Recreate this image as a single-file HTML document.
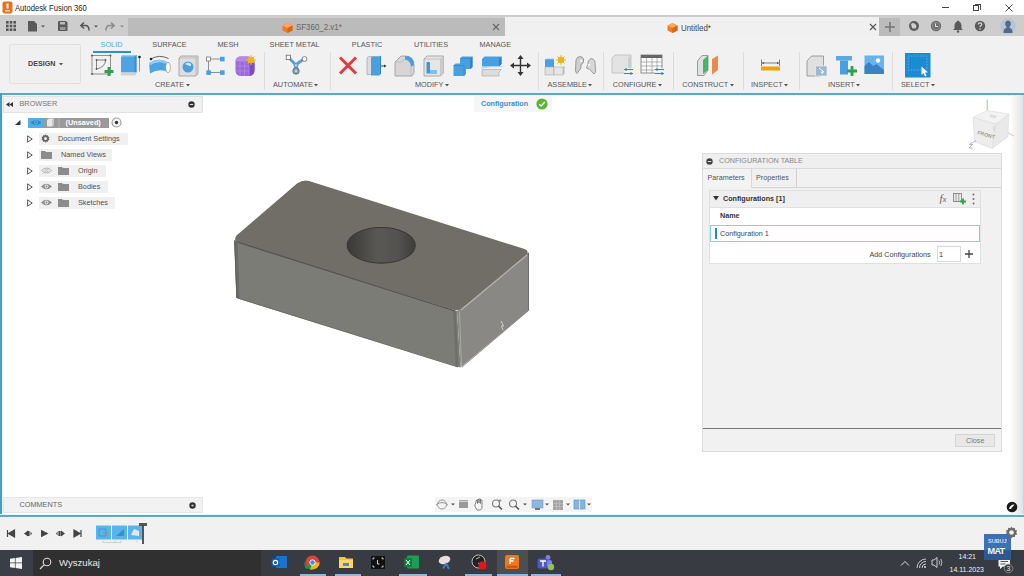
<!DOCTYPE html>
<html><head><meta charset="utf-8">
<style>
*{margin:0;padding:0;box-sizing:border-box}
html,body{width:1024px;height:576px;overflow:hidden;background:#fff;font-family:"Liberation Sans",sans-serif;position:relative}
.a{position:absolute}
.t{position:absolute;white-space:nowrap;line-height:1}
svg{position:absolute;overflow:visible}
.rl{position:absolute;top:40.6px;font-size:7.3px;color:#555;white-space:nowrap;line-height:1;transform:translateX(-50%)}
.gl{position:absolute;top:81px;font-size:7.3px;color:#555;white-space:nowrap;line-height:1}
.sep{position:absolute;top:52px;width:1px;height:38px;background:#dcdcdc}
</style></head><body>
<!-- title bar -->
<svg style="left:2px;top:1px" width="11" height="13" viewBox="0 0 11 13"><rect x="0.5" y="0.5" width="10" height="12" rx="2" fill="#e8711f"/><rect x="4.5" y="2.5" width="2" height="5" fill="#fff"/><rect x="3" y="9" width="5" height="1.5" fill="#fbd3b0"/></svg>
<div class="t" style="left:15px;top:4.2px;font-size:9px;color:#222;transform:scaleX(0.85);transform-origin:0 0">Autodesk Fusion 360</div>
<div class="a" style="left:942px;top:7px;width:7px;height:1px;background:#444"></div>
<div class="a" style="left:973px;top:5px;width:6px;height:6px;border:1px solid #444"></div>
<div class="a" style="left:975px;top:3.5px;width:6px;height:6px;border-top:1px solid #444;border-right:1px solid #444"></div>
<svg style="left:1005px;top:4px" width="8" height="8" viewBox="0 0 8 8"><path d="M0.5 0.5L7.5 7.5M7.5 0.5L0.5 7.5" stroke="#444" stroke-width="1"/></svg>
<!-- top toolbar row -->
<div class="a" style="left:0;top:15px;width:1024px;height:21px;background:#cdcdcd"></div>
<div class="a" style="left:128px;top:18px;width:377px;height:18px;background:#bbbbbb"></div>
<div class="a" style="left:505px;top:17px;width:374px;height:19px;background:#f0f0f0"></div>
<div class="a" style="left:879px;top:18px;width:21px;height:18px;background:#bbbbbb"></div>
<!-- qa icons -->
<svg style="left:6px;top:21px" width="10" height="10" viewBox="0 0 10 10" fill="#555"><rect x="0" y="0" width="2.6" height="2.6"/><rect x="3.7" y="0" width="2.6" height="2.6"/><rect x="7.4" y="0" width="2.6" height="2.6"/><rect x="0" y="3.7" width="2.6" height="2.6"/><rect x="3.7" y="3.7" width="2.6" height="2.6"/><rect x="7.4" y="3.7" width="2.6" height="2.6"/><rect x="0" y="7.4" width="2.6" height="2.6"/><rect x="3.7" y="7.4" width="2.6" height="2.6"/><rect x="7.4" y="7.4" width="2.6" height="2.6"/></svg>
<svg style="left:28px;top:21px" width="20" height="11" viewBox="0 0 20 11"><path d="M0 0H6L9 3V10.5H0Z" fill="#5a5a5a"/><path d="M13 4.5H17L15 6.5Z" fill="#555"/></svg>
<svg style="left:58px;top:21px" width="10" height="10" viewBox="0 0 10 10"><path d="M0 1Q0 0 1 0H8L9.5 1.5V9Q9.5 10 8.5 10H1Q0 10 0 9Z" fill="#5a5a5a"/><rect x="2" y="1" width="5" height="2.5" fill="#bbb"/><rect x="2" y="6" width="5.5" height="3" fill="#999"/></svg>
<svg style="left:80px;top:22px" width="20" height="10" viewBox="0 0 20 10"><path d="M4 0.5L0.8 3.5L4 6.5M1 3.5H5.5Q9 3.5 9 8.5" fill="none" stroke="#555" stroke-width="1.5"/><path d="M14 3.5H18L16 5.5Z" fill="#555"/></svg>
<svg style="left:105px;top:22px" width="20" height="10" viewBox="0 0 20 10"><path d="M6 0.5L9.2 3.5L6 6.5M9 3.5H4.5Q1 3.5 1 8.5" fill="none" stroke="#8a8a8a" stroke-width="1.5"/><path d="M15 3.5H19L17 5.5Z" fill="#8a8a8a"/></svg>
<!-- tabs -->
<svg style="left:282px;top:23px" width="11" height="10" viewBox="0 0 11 10"><path d="M5.5 0L10.5 2.5V7.5L5.5 10L0.5 7.5V2.5Z" fill="#f07c22"/><path d="M0.5 2.5L5.5 5L10.5 2.5L5.5 0Z" fill="#f9a860"/><path d="M5.5 5V10L10.5 7.5V2.5Z" fill="#e0620f"/></svg>
<div class="t" style="left:296px;top:23.3px;font-size:9px;color:#666;transform:scaleX(0.88);transform-origin:0 0">SF360_2.v1*</div>
<svg style="left:492px;top:23px" width="8" height="8" viewBox="0 0 8 8"><path d="M1 1L7 7M7 1L1 7" stroke="#666" stroke-width="1.1"/></svg>
<svg style="left:667px;top:22.5px" width="11" height="10" viewBox="0 0 11 10"><path d="M5.5 0L10.5 2.5V7.5L5.5 10L0.5 7.5V2.5Z" fill="#f07c22"/><path d="M0.5 2.5L5.5 5L10.5 2.5L5.5 0Z" fill="#f9a860"/><path d="M5.5 5V10L10.5 7.5V2.5Z" fill="#e0620f"/></svg>
<div class="t" style="left:680.5px;top:23.9px;font-size:8.7px;color:#444;transform:scaleX(0.91);transform-origin:0 0">Untitled*</div>
<svg style="left:869px;top:23px" width="8" height="8" viewBox="0 0 8 8"><path d="M1 1L7 7M7 1L1 7" stroke="#555" stroke-width="1.1"/></svg>
<svg style="left:884px;top:21px" width="12" height="12" viewBox="0 0 12 12"><path d="M6 1V11M1 6H11" stroke="#777" stroke-width="1.6"/></svg>
<svg style="left:908px;top:20px" width="12" height="12" viewBox="0 0 12 12"><circle cx="6" cy="6" r="5" fill="#5c5c5c"/><path d="M3 4Q5 2 7 4Q9 5 8 8Q6 9 4 8" fill="#cfcfcf"/></svg>
<svg style="left:930px;top:20px" width="12" height="12" viewBox="0 0 12 12"><circle cx="6" cy="6" r="5.2" fill="#6a6a6a"/><circle cx="6" cy="6" r="3.6" fill="none" stroke="#999" stroke-width="0.8"/><path d="M5.5 3.5V6.5H8" stroke="#e0e0e0" stroke-width="1.1" fill="none"/></svg>
<svg style="left:952px;top:20px" width="12" height="13" viewBox="0 0 12 13"><path d="M6 0.5Q7 0.5 7 1.5Q9.5 2.5 9.5 6V8.5L11 10H1L2.5 8.5V6Q2.5 2.5 5 1.5Q5 0.5 6 0.5Z" fill="#5a5a5a"/><circle cx="6" cy="11.5" r="1.2" fill="#5a5a5a"/></svg>
<svg style="left:974px;top:20px" width="12" height="12" viewBox="0 0 12 12"><circle cx="6" cy="6" r="5.2" fill="#5a5a5a"/><path d="M4.2 4.6Q4.2 2.8 6 2.8Q7.8 2.8 7.8 4.4Q7.8 5.4 6.6 6Q6 6.3 6 7.2" stroke="#ddd" stroke-width="1.2" fill="none"/><circle cx="6" cy="9" r="0.8" fill="#ddd"/></svg>
<svg style="left:999.5px;top:18px" width="16" height="16" viewBox="0 0 16 16"><circle cx="8" cy="8" r="7.8" fill="#b8c4d4"/><path d="M3.5 15Q3.5 10 6.5 10V9Q5 7.5 5.2 5Q5.5 2.5 8 2.5Q10.5 2.5 10.8 5Q11 7.5 9.5 9V10Q12.5 10 12.5 15Z" fill="#4e6a8e"/></svg>
<!-- ribbon -->
<div class="a" style="left:0;top:36px;width:1024px;height:57px;background:#f1f1f1"></div>
<div class="a" style="left:0;top:92px;width:1024px;height:4px;background:linear-gradient(#e2f8fa 0,#e2f8fa 25%,#62a6c4 25%,#62a6c4 75%,#e2f8fa 75%)"></div>
<div class="a" style="left:8.5px;top:44px;width:72px;height:40px;border:1px solid #e0e0e0;border-radius:2px;background:#f0f0f0"></div>
<div class="t" style="left:28px;top:59.5px;font-size:7.2px;font-weight:bold;color:#444">DESIGN</div>
<svg style="left:58.5px;top:62.5px" width="4" height="3" viewBox="0 0 4 3"><path d="M0 0H4L2 2.5Z" fill="#555"/></svg>
<div class="rl" style="left:111.5px;color:#57a6d4">SOLID</div>
<div class="a" style="left:92.5px;top:50.5px;width:38px;height:2px;background:#2e8fd0"></div>
<div class="rl" style="left:169.5px">SURFACE</div>
<div class="rl" style="left:228px">MESH</div>
<div class="rl" style="left:294.6px">SHEET METAL</div>
<div class="rl" style="left:367px">PLASTIC</div>
<div class="rl" style="left:431px">UTILITIES</div>
<div class="rl" style="left:495.3px">MANAGE</div>
<div class="gl" style="left:155px">CREATE</div>
<svg style="left:185.6px;top:83.5px" width="4" height="3" viewBox="0 0 4 3"><path d="M0 0H4L2 2.5Z" fill="#555"/></svg>
<div class="gl" style="left:273px">AUTOMATE</div>
<svg style="left:314.4px;top:83.5px" width="4" height="3" viewBox="0 0 4 3"><path d="M0 0H4L2 2.5Z" fill="#555"/></svg>
<div class="gl" style="left:415px">MODIFY</div>
<svg style="left:444.9px;top:83.5px" width="4" height="3" viewBox="0 0 4 3"><path d="M0 0H4L2 2.5Z" fill="#555"/></svg>
<div class="gl" style="left:547.5px">ASSEMBLE</div>
<svg style="left:588.3px;top:83.5px" width="4" height="3" viewBox="0 0 4 3"><path d="M0 0H4L2 2.5Z" fill="#555"/></svg>
<div class="gl" style="left:612.7px">CONFIGURE</div>
<svg style="left:658.0px;top:83.5px" width="4" height="3" viewBox="0 0 4 3"><path d="M0 0H4L2 2.5Z" fill="#555"/></svg>
<div class="gl" style="left:682.3px">CONSTRUCT</div>
<svg style="left:729.6px;top:83.5px" width="4" height="3" viewBox="0 0 4 3"><path d="M0 0H4L2 2.5Z" fill="#555"/></svg>
<div class="gl" style="left:751px">INSPECT</div>
<svg style="left:784.1px;top:83.5px" width="4" height="3" viewBox="0 0 4 3"><path d="M0 0H4L2 2.5Z" fill="#555"/></svg>
<div class="gl" style="left:828px">INSERT</div>
<svg style="left:856.1px;top:83.5px" width="4" height="3" viewBox="0 0 4 3"><path d="M0 0H4L2 2.5Z" fill="#555"/></svg>
<div class="gl" style="left:901px">SELECT</div>
<svg style="left:930.9px;top:83.5px" width="4" height="3" viewBox="0 0 4 3"><path d="M0 0H4L2 2.5Z" fill="#555"/></svg>
<div class="sep" style="left:263.5px"></div>
<div class="sep" style="left:330px"></div>
<div class="sep" style="left:538px"></div>
<div class="sep" style="left:603px"></div>
<div class="sep" style="left:672.5px"></div>
<div class="sep" style="left:742.5px"></div>
<div class="sep" style="left:798.5px"></div>
<div class="sep" style="left:891.5px"></div>
<!-- CREATE icons -->
<svg style="left:91px;top:55px" width="23" height="22" viewBox="0 0 23 22"><rect x="1" y="0.5" width="18.5" height="18.5" fill="none" stroke="#777" stroke-width="0.8"/><circle cx="1" cy="0.5" r="0.9" fill="#555"/><circle cx="19.5" cy="0.5" r="0.9" fill="#555"/><circle cx="1" cy="19" r="0.9" fill="#555"/><path d="M5.5 5H14.5Q14.5 12 5.5 14Z" fill="none" stroke="#666" stroke-width="0.8"/><circle cx="5.5" cy="5" r="0.9" fill="#555"/><circle cx="14.5" cy="5" r="0.9" fill="#555"/><circle cx="5.5" cy="14" r="0.9" fill="#555"/><path d="M18 12V21M13.5 16.5H22.5" stroke="#2ca24a" stroke-width="2.8"/></svg>
<svg style="left:120px;top:54px" width="22" height="23" viewBox="0 0 22 23"><path d="M1 4Q1 1 4 1H16.5V18.5H1Z" fill="#4ea3e3"/><path d="M1 4Q1 1 4 1H16.5L15.5 2.5H2.5Q1.2 2.5 1 4Z" fill="#8fcdf3"/><path d="M14.5 2.5L16.5 1V18.5L14.5 18.5Z" fill="#3a8fd6"/><path d="M1 18.5H16.5L15.5 21.5H1Z" fill="#cfd3d6"/><path d="M19.5 3V17.5" stroke="#8a8a8a" stroke-width="0.9"/><circle cx="19.5" cy="3" r="1.3" fill="#222"/></svg>
<svg style="left:148px;top:54px" width="24" height="22" viewBox="0 0 24 22"><path d="M3 5Q11 0 20.5 4.5" fill="none" stroke="#555" stroke-width="0.9"/><circle cx="3" cy="5" r="1.3" fill="#222"/><path d="M1 9Q11 3 20.5 8.5V18Q11 14 2 19.5Z" fill="#4ea3e3"/><path d="M1 9Q11 3 20.5 8.5L18.5 10Q11 6 1.5 11.5Z" fill="#8fcdf3"/><ellipse cx="20" cy="13.5" rx="2.3" ry="5" fill="#fff" stroke="#8a8a8a" stroke-width="0.7"/></svg>
<svg style="left:178px;top:55px" width="22" height="22" viewBox="0 0 22 22"><path d="M1 3L3 1H20V19L18 21H1Z" fill="#dedede" stroke="#9a9a9a" stroke-width="0.8"/><path d="M18 3V21M1 3H18M18 3L20 1" fill="none" stroke="#aaa" stroke-width="0.6"/><path d="M18 3L20 1V19L18 21Z" fill="#c6c6c6"/><circle cx="10" cy="12" r="5.5" fill="#4a9fe0"/><path d="M7 9Q10 7 12.5 8.5Q14 10.5 12 11Q9 10 7 9Z" fill="#d8ecfa"/></svg>
<svg style="left:205px;top:55px" width="22" height="21" viewBox="0 0 22 21"><path d="M3.5 4H17.5M3.5 4V17.5H17.5" fill="none" stroke="#777" stroke-width="0.8"/><rect x="1.5" y="2" width="4" height="4" fill="#fff" stroke="#777" stroke-width="0.8"/><rect x="15" y="1.8" width="4.6" height="4.6" fill="#4a9fe0"/><rect x="1.3" y="15.3" width="4.6" height="4.6" fill="#4a9fe0"/><rect x="15" y="15.3" width="4.6" height="4.6" fill="#4a9fe0"/></svg>
<svg style="left:235px;top:55px" width="22" height="22" viewBox="0 0 22 22"><path d="M0.5 7Q0.5 1.5 6 1.5H13Q19.5 1.5 19.5 8V15Q19.5 21 13.5 21H6Q0.5 21 0.5 15Z" fill="#9a6ad8"/><path d="M0.5 7Q0.5 1.5 6 1.5H13Q16 1.5 17.5 3L14 6.5H1Z" fill="#b48ae6"/><path d="M14 6.5L17.5 3Q19.5 5 19.5 8V15Q19.5 19 16 20.5L14 21Z" fill="#7d4ec4"/><path d="M1 11H14M1 16H14M5 6.5V21M9.5 6.5V21M14 6.5V21" stroke="#b996ea" stroke-width="0.6" fill="none"/><circle cx="16" cy="5" r="3.3" fill="#f2b41c"/><path d="M16 0V10M11 5H21M12.5 1.5L19.5 8.5M19.5 1.5L12.5 8.5" stroke="#f2b41c" stroke-width="1"/></svg>
<!-- AUTOMATE -->
<svg style="left:285px;top:54px" width="23" height="21" viewBox="0 0 23 21"><path d="M4 4L9.5 9.5L11 15L12.5 9.5L19 5" fill="none" stroke="#5b9bd0" stroke-width="2.8" stroke-linejoin="round"/><path d="M8 9H14L11 14.5Z" fill="#5b9bd0"/><path d="M9.5 10.5H12.5L11 13Z" fill="#cfe3f3"/><rect x="1.2" y="1.2" width="4.2" height="4.2" fill="#fff" stroke="#666" stroke-width="0.8"/><circle cx="19.5" cy="5" r="2.4" fill="#fff" stroke="#666" stroke-width="0.8"/><circle cx="11" cy="17" r="3.2" fill="#7f9fbb" stroke="#5d6f80" stroke-width="0.9"/><circle cx="11" cy="17" r="1.3" fill="#c9d4de"/></svg>
<!-- MODIFY -->
<svg style="left:338px;top:56px" width="20" height="19" viewBox="0 0 20 19"><path d="M2 1.5L18 17.5M18 1.5L2 17.5" stroke="#e33b3b" stroke-width="3"/></svg>
<svg style="left:366px;top:55px" width="21" height="22" viewBox="0 0 21 22"><path d="M1 4Q1 1.5 3.5 1.5H13V19.5H1Z" fill="#dcdcdc" stroke="#999" stroke-width="0.6"/><path d="M5 2.5Q6 1.5 8 1.5H13.5V20.5H5Z" fill="#4a9fe0"/><path d="M13.5 1.5L15 0.5V18.5L13.5 20.5Z" fill="#2e7fc4"/><path d="M15 11H19.5" stroke="#333" stroke-width="0.9"/><path d="M18 9.5L20.5 11L18 12.5Z" fill="#333"/></svg>
<svg style="left:394px;top:55px" width="22" height="22" viewBox="0 0 22 22"><path d="M1 7L7 1H11Q20 1 20 10V18L18 21H1Z" fill="#d6d6d6" stroke="#9a9a9a" stroke-width="0.8"/><path d="M11 1Q20 1 20 10L17 12Q16.5 5 11 4.5Z" fill="#4a9fe0"/><path d="M17 12V21M1 7H7L11 4.5" fill="none" stroke="#aaa" stroke-width="0.5"/></svg>
<svg style="left:423px;top:55px" width="22" height="22" viewBox="0 0 22 22"><path d="M1 4L4 1H20.5V18L17.5 21H1Z" fill="#e6e6e6" stroke="#999" stroke-width="0.8"/><path d="M17.5 4V21M1 4H17.5L20.5 1" fill="none" stroke="#aaa" stroke-width="0.6"/><path d="M17.5 4L20.5 1V18L17.5 21Z" fill="#cbcbcb"/><path d="M3.5 7H7V15H14V18.5H3.5Z" fill="#3d95dc"/><path d="M7 15H14V18.5H7Z" fill="#7cc0ef"/></svg>
<svg style="left:452px;top:55px" width="22" height="22" viewBox="0 0 22 22"><path d="M8 3.5L10 1.5H20.5V12L18.5 14H14V19L12 21H1.5V10.5L3.5 8.5H8Z" fill="#4a9fe0"/><path d="M8 3.5H18.5V14M1.5 10.5H12V21" fill="none" stroke="#2f82c8" stroke-width="0.6"/><path d="M18.5 3.5L20.5 1.5V12L18.5 14Z" fill="#2f82c8"/></svg>
<svg style="left:481px;top:55px" width="22" height="22" viewBox="0 0 22 22"><path d="M1 4L3.5 1.5H20.5V9L18 11.5H1Z" fill="#4a9fe0"/><path d="M18 4L20.5 1.5V9L18 11.5Z" fill="#2f82c8"/><path d="M1 14.5H20.5L18 17V21H1Z" fill="#dcdcdc" stroke="#999" stroke-width="0.5"/><path d="M0 13Q10 11 21.5 11.5" fill="none" stroke="#a9d6f5" stroke-width="1"/></svg>
<svg style="left:510px;top:55px" width="21" height="21" viewBox="0 0 21 21"><path d="M10.5 2V19M2 10.5H19" stroke="#333" stroke-width="1.4"/><path d="M10.5 0L13.5 4H7.5ZM10.5 21L13.5 17H7.5ZM0 10.5L4 7.5V13.5ZM21 10.5L17 7.5V13.5Z" fill="#333"/></svg>
<!-- ASSEMBLE -->
<svg style="left:544px;top:55px" width="24" height="21" viewBox="0 0 24 21"><rect x="1" y="4" width="9" height="8" fill="#4a9fe0"/><path d="M1 5.5L2.5 4H10" fill="none" stroke="#8ccaf2" stroke-width="0.8"/><rect x="1" y="12" width="9" height="8" fill="#e0e0e0" stroke="#aaa" stroke-width="0.6"/><rect x="10" y="12" width="9" height="8" fill="#e6e6e6" stroke="#aaa" stroke-width="0.6"/><path d="M19 12L20.5 10.5V18.5L19 20Z" fill="#bbb"/><circle cx="17" cy="5" r="3.2" fill="#f2b41c"/><path d="M17 0V10M12 5H22M13.5 1.5L20.5 8.5M20.5 1.5L13.5 8.5" stroke="#f2b41c" stroke-width="1"/></svg>
<svg style="left:574px;top:55px" width="23" height="20" viewBox="0 0 23 20"><path d="M2 5Q3 1.5 6 1.5Q8.5 1.5 9.5 4V7Q9 9 7 9.5V13L3 18.5Q1.5 17.5 1.5 15Z" fill="#cfcfcf" stroke="#888" stroke-width="0.8"/><path d="M21 7Q20 3.5 17 3.5Q15 4.5 14 7V10Q12.5 11 12.5 13Q14 14 15.5 14L20 19Q21.5 18 21.5 16Z" fill="#d8d8d8" stroke="#888" stroke-width="0.8"/><circle cx="7" cy="6" r="1" fill="#fff"/><circle cx="15" cy="10" r="1" fill="#fff"/></svg>
<!-- CONFIGURE -->
<svg style="left:611px;top:54px" width="24" height="22" viewBox="0 0 24 22"><path d="M1 4L4 1H20V16L17 19H1Z" fill="#e3e3e3" stroke="#b5b5b5" stroke-width="0.7"/><path d="M17 4L20 1V16L17 19Z" fill="#cdcdcd"/><rect x="13" y="14" width="9" height="7" fill="#f1f1f1"/><path d="M13 15.5H22M13 19.5H22" stroke="#3d7bb0" stroke-width="1"/><path d="M15 14V17M20 18V21" stroke="#3d7bb0" stroke-width="1"/></svg>
<svg style="left:640px;top:54px" width="25" height="22" viewBox="0 0 25 22"><rect x="1" y="1" width="21" height="18" fill="#fafafa" stroke="#777" stroke-width="0.8"/><rect x="1" y="1" width="21" height="3" fill="#666"/><path d="M1 8H22M1 12H22M1 16H22M6.5 4V19M12 4V19M17 4V19" stroke="#888" stroke-width="0.6"/><rect x="15" y="14" width="9" height="7" fill="#f1f1f1"/><path d="M15 15.5H24M15 19.5H24" stroke="#3d7bb0" stroke-width="1"/><path d="M17 14V17M22 18V21" stroke="#3d7bb0" stroke-width="1"/></svg>
<!-- CONSTRUCT -->
<svg style="left:696px;top:54px" width="24" height="23" viewBox="0 0 24 23"><path d="M1.5 7L6 1.5H12V16L8 21.5H1.5Z" fill="#e0e0e0" stroke="#888" stroke-width="0.8"/><path d="M7 6L12 1.5V16L7 20Z" fill="#44b766"/><path d="M16 5L22 1.5V16L16 20.5Z" fill="#ef8a4c"/></svg>
<!-- INSPECT -->
<svg style="left:760px;top:59px" width="22" height="13" viewBox="0 0 22 13"><path d="M1.5 0.5V7M19.5 0.5V7" stroke="#666" stroke-width="0.8"/><path d="M2 4H19" stroke="#666" stroke-width="0.8"/><path d="M2 4L4 2.8V5.2ZM19 4L17 2.8V5.2Z" fill="#555"/><rect x="1" y="7.5" width="19" height="4" fill="#f1a30f"/></svg>
<!-- INSERT -->
<svg style="left:806px;top:55px" width="22" height="22" viewBox="0 0 22 22"><path d="M1 6L5.5 1H17.5V18L14 21H1Z" fill="#e0e0e0" stroke="#8c8c8c" stroke-width="0.8"/><rect x="9.5" y="11" width="11.5" height="10" fill="#9cb8d0" stroke="#eee" stroke-width="0.7"/><path d="M13 13L18 17L15.5 17L16.5 19" fill="none" stroke="#fff" stroke-width="1"/></svg>
<svg style="left:835px;top:55px" width="23" height="21" viewBox="0 0 23 21"><rect x="1" y="1" width="16" height="4.5" fill="#5da8e2"/><rect x="5" y="5.5" width="8" height="14" fill="#4a9fe0"/><path d="M17 11V21M12 16H22" stroke="#2ca24a" stroke-width="2.8"/></svg>
<svg style="left:864px;top:55px" width="21" height="20" viewBox="0 0 21 20"><rect x="0.5" y="0.5" width="19.5" height="18.5" fill="#67b4ec"/><path d="M0.5 19V11L5 7L9 11L12.5 9L20 15V19Z" fill="#3b82c4"/><circle cx="14" cy="5.5" r="2.2" fill="#fafafa"/></svg>
<!-- SELECT -->
<svg style="left:905px;top:53px" width="26" height="25" viewBox="0 0 26 25"><rect x="0" y="0" width="25.5" height="24.5" fill="#1b8bd4"/><rect x="3" y="3" width="19" height="14" fill="none" stroke="#7cc0ef" stroke-width="0.7" stroke-dasharray="1.5 1.5"/><path d="M16.5 13.5V22L18.5 20L20 23.5L21.5 22.8L20 19.5H23Z" fill="#fff"/></svg>
<!-- viewport -->
<div class="a" style="left:0;top:96px;width:1024px;height:418px;background:#fff"></div>
<div class="a" style="left:1010px;top:95px;width:14px;height:420px;background:linear-gradient(to right,#fff 0%,#f3f2f0 40%,#ebebea 65%,#dfe6eb 88%,#c3ced6 100%)"></div>
<div class="a" style="left:0;top:93px;width:1.6px;height:423px;background:#4a9cc4"></div><div class="a" style="left:2px;top:95px;width:1px;height:420px;background:#dff7fa"></div>
<div class="a" style="left:0;top:514px;width:1024px;height:4px;background:linear-gradient(#e2f8fa 0,#e2f8fa 25%,#62a6c4 25%,#62a6c4 75%,#e2f8fa 75%)"></div>
<!-- browser -->
<div class="a" style="left:2.5px;top:96px;width:200px;height:16.5px;background:#f1f1f1;border:1px solid #e2e2e2"></div>
<svg style="left:6px;top:102px" width="7" height="5" viewBox="0 0 7 5"><path d="M0 2.5L3.5 0V5ZM3.5 2.5L7 0V5Z" fill="#333"/></svg>
<div class="t" style="left:19.5px;top:100px;font-size:7.3px;color:#777">BROWSER</div>
<svg style="left:188px;top:100.5px" width="7" height="7" viewBox="0 0 7 7"><circle cx="3.5" cy="3.5" r="3.2" fill="#333"/><rect x="1.8" y="3" width="3.4" height="1" fill="#ddd"/></svg>
<!-- root row -->
<svg style="left:15px;top:120px" width="6" height="5" viewBox="0 0 6 5"><path d="M5.5 0V5H0Z" fill="#333"/></svg>
<div class="a" style="left:28px;top:117.5px;width:16px;height:10px;background:#4fb0e8"></div>
<svg style="left:30px;top:119px" width="12" height="7" viewBox="0 0 12 7"><path d="M0.5 3.5Q6 -1.5 11.5 3.5Q6 8.5 0.5 3.5Z" fill="#2c86c8"/><circle cx="6" cy="3.5" r="1.6" fill="none" stroke="#8fd0f5" stroke-width="0.6"/></svg>
<div class="a" style="left:44px;top:117.5px;width:64.5px;height:10px;background:#9a9a9a"></div>
<svg style="left:46px;top:118px" width="9" height="9" viewBox="0 0 9 9"><path d="M1 2L3 0.5H8V7L6 8.5H1Z" fill="#e8e8e8"/><path d="M6 2L8 0.5V7L6 8.5Z" fill="#c8c8c8"/></svg>
<div class="a" style="left:58px;top:117.5px;width:2px;height:10px;background:#a8a8a8"></div>
<div class="t" style="left:65.5px;top:119px;font-size:7.3px;font-weight:bold;color:#fff">(Unsaved)</div>
<svg style="left:110.5px;top:117px" width="11" height="11" viewBox="0 0 11 11"><circle cx="5.5" cy="5.5" r="4.5" fill="#f6f6f6" stroke="#a0a0a0" stroke-width="1.2"/><circle cx="5.5" cy="5.5" r="1.7" fill="#333"/></svg>
<!-- child rows -->
<svg style="left:27px;top:135px" width="6" height="8" viewBox="0 0 6 8"><path d="M0.6 0.8L5.2 4L0.6 7.2Z" fill="none" stroke="#444" stroke-width="0.9"/></svg>
<svg style="left:27px;top:151px" width="6" height="8" viewBox="0 0 6 8"><path d="M0.6 0.8L5.2 4L0.6 7.2Z" fill="none" stroke="#444" stroke-width="0.9"/></svg>
<svg style="left:27px;top:167px" width="6" height="8" viewBox="0 0 6 8"><path d="M0.6 0.8L5.2 4L0.6 7.2Z" fill="none" stroke="#444" stroke-width="0.9"/></svg>
<svg style="left:27px;top:183px" width="6" height="8" viewBox="0 0 6 8"><path d="M0.6 0.8L5.2 4L0.6 7.2Z" fill="none" stroke="#444" stroke-width="0.9"/></svg>
<svg style="left:27px;top:199px" width="6" height="8" viewBox="0 0 6 8"><path d="M0.6 0.8L5.2 4L0.6 7.2Z" fill="none" stroke="#444" stroke-width="0.9"/></svg>
<div class="a" style="left:39px;top:132.5px;width:89px;height:12.5px;background:#f0f0f0"></div>
<div class="a" style="left:39px;top:148.5px;width:73px;height:12.5px;background:#f0f0f0"></div>
<div class="a" style="left:39px;top:164.5px;width:66.5px;height:12.5px;background:#f0f0f0"></div>
<div class="a" style="left:39px;top:180.5px;width:68.5px;height:12.5px;background:#f0f0f0"></div>
<div class="a" style="left:39px;top:196.5px;width:76px;height:12.5px;background:#f0f0f0"></div>
<svg style="left:40.5px;top:134px" width="9" height="9" viewBox="0 0 9 9"><path d="M4.5 0.3L5.3 1.6L6.8 1.1L7 2.6L8.5 3.1L7.8 4.5L8.5 5.9L7 6.4L6.8 7.9L5.3 7.4L4.5 8.7L3.7 7.4L2.2 7.9L2 6.4L0.5 5.9L1.2 4.5L0.5 3.1L2 2.6L2.2 1.1L3.7 1.6Z" fill="#666"/><circle cx="4.5" cy="4.5" r="1.5" fill="#f0f0f0"/></svg>
<div class="t" style="left:58px;top:135px;font-size:7.3px;color:#505050">Document Settings</div>
<svg style="left:40.5px;top:150px" width="11" height="9" viewBox="0 0 11 9"><path d="M0 1H4L5 2H11V9H0Z" fill="#8c8c8c"/></svg>
<div class="t" style="left:61px;top:151px;font-size:7.3px;color:#505050">Named Views</div>
<svg style="left:40.5px;top:167px" width="11" height="7" viewBox="0 0 11 7"><path d="M0.5 3.5Q5.5 -1.5 10.5 3.5Q5.5 8.5 0.5 3.5Z" fill="none" stroke="#b8b8b8" stroke-width="1"/><circle cx="5.5" cy="3.5" r="1.6" fill="none" stroke="#b8b8b8" stroke-width="0.9"/><path d="M1.5 6.5L9.5 0.5" stroke="#c4c4c4" stroke-width="0.7"/></svg>
<svg style="left:57.5px;top:166px" width="11" height="9" viewBox="0 0 11 9"><path d="M0 1H4L5 2H11V9H0Z" fill="#8c8c8c"/></svg>
<div class="t" style="left:78px;top:167px;font-size:7.3px;color:#505050">Origin</div>
<svg style="left:40.5px;top:183px" width="11" height="7" viewBox="0 0 11 7"><path d="M0 3.5Q5.5 -2 11 3.5Q5.5 9 0 3.5Z" fill="#8c8c8c"/><circle cx="5.5" cy="3.5" r="1.9" fill="#e8e8e8"/><circle cx="5.5" cy="3.5" r="1" fill="#8c8c8c"/></svg>
<svg style="left:57.5px;top:182px" width="11" height="9" viewBox="0 0 11 9"><path d="M0 1H4L5 2H11V9H0Z" fill="#8c8c8c"/></svg>
<div class="t" style="left:78px;top:183px;font-size:7.3px;color:#505050">Bodies</div>
<svg style="left:40.5px;top:199px" width="11" height="7" viewBox="0 0 11 7"><path d="M0 3.5Q5.5 -2 11 3.5Q5.5 9 0 3.5Z" fill="#8c8c8c"/><circle cx="5.5" cy="3.5" r="1.9" fill="#e8e8e8"/><circle cx="5.5" cy="3.5" r="1" fill="#8c8c8c"/></svg>
<svg style="left:57.5px;top:198px" width="11" height="9" viewBox="0 0 11 9"><path d="M0 1H4L5 2H11V9H0Z" fill="#8c8c8c"/></svg>
<div class="t" style="left:78px;top:199px;font-size:7.3px;color:#505050">Sketches</div>
<!-- configuration label -->
<div class="a" style="left:474px;top:96px;width:78px;height:16px;background:#f6f6f6"></div>
<div class="t" style="left:481px;top:100.3px;font-size:7.2px;font-weight:bold;color:#3d8fc8">Configuration</div>
<svg style="left:536px;top:98px" width="12" height="12" viewBox="0 0 12 12"><circle cx="6" cy="6" r="5.6" fill="#5cb531"/><path d="M3.2 6.2L5.2 8L8.8 4" fill="none" stroke="#fff" stroke-width="1.5"/></svg>
<!-- 3D model -->
<svg style="left:0;top:0" width="1024" height="576" viewBox="0 0 1024 576">
<defs>
<linearGradient id="hg" x1="0" x2="1" y1="0" y2="0"><stop offset="0" stop-color="#3a3937"/><stop offset="0.45" stop-color="#5a5855"/><stop offset="0.75" stop-color="#545250"/><stop offset="1" stop-color="#3e3d3b"/></linearGradient>
</defs>
<!-- front face -->
<path d="M234 240L457 311L460.5 367.5L236.5 298Z" fill="#7b7c76"/>
<!-- right face -->
<path d="M457 311L528.5 252L528.5 310.5L460.5 367.5Z" fill="#8a8884"/>
<!-- top face -->
<path d="M297 183.5Q303 179.5 309 181L524.5 249Q530 251 526 255L462 308Q458 311.5 452 309.5L238.5 242.5Q233 240.5 236.5 235.5Z" fill="#716d67"/>
<!-- edges -->
<path d="M237 242L455 311" stroke="#56544f" stroke-width="1.3" fill="none"/>
<path d="M461 310L527 255" stroke="#b8b5b0" stroke-width="1.2" fill="none"/>
<path d="M236 241L238 298" stroke="#6b6d68" stroke-width="3.2" fill="none"/>
<path d="M234.8 240.5L236.8 298" stroke="#5d5f5a" stroke-width="0.9" fill="none"/>
<path d="M237.5 298L458 367" stroke="#6a6c67" stroke-width="1" fill="none"/>
<path d="M454.5 311L457 366.5" stroke="#6d6f6a" stroke-width="2.6" fill="none"/>
<path d="M459.5 311L461.5 367" stroke="#a9a8a3" stroke-width="1" fill="none"/>
<path d="M462 367L528.5 310.5" stroke="#7a7874" stroke-width="0.8" fill="none"/>
<path d="M528.5 253L528.5 310.5" stroke="#6f6d69" stroke-width="1" fill="none"/>
<!-- hole -->
<ellipse cx="381.2" cy="245.3" rx="34" ry="17.8" fill="url(#hg)" stroke="#3b3835" stroke-width="1.1"/>
<path d="M501 321L503.5 326L501.5 326L503 330" stroke="#d0d0cc" stroke-width="1" fill="none"/>
</svg>
<!-- config panel -->
<div class="a" style="left:702px;top:152.5px;width:300px;height:299.5px;background:#f1f1f1;border:1px solid #dcdcdc"></div>
<div class="a" style="left:703px;top:153.5px;width:298px;height:15.5px;background:#efefef;border-bottom:1px solid #dadada"></div>
<svg style="left:705.5px;top:157.5px" width="7" height="7" viewBox="0 0 7 7"><circle cx="3.5" cy="3.5" r="3.2" fill="#444"/><rect x="1.8" y="3" width="3.4" height="1" fill="#ddd"/></svg>
<div class="t" style="left:719px;top:156.5px;font-size:7.2px;color:#888">CONFIGURATION TABLE</div>
<div class="a" style="left:703px;top:187px;width:298px;height:1px;background:#d4d4d4"></div>
<div class="a" style="left:703px;top:169px;width:48.5px;height:19px;background:#f3f3f3;border-right:1px solid #d8d8d8"></div>
<div class="a" style="left:751.5px;top:169px;width:45px;height:18px;background:#f0f0f0;border-right:1px solid #d0d0d0"></div>
<div class="t" style="left:707.5px;top:174px;font-size:7.2px;color:#555">Parameters</div>
<div class="t" style="left:756px;top:174px;font-size:7.2px;color:#555">Properties</div>
<!-- section -->
<div class="a" style="left:708.5px;top:189.5px;width:272.5px;height:74.5px;background:#fff;border:1px solid #e0e0e0"></div>
<div class="a" style="left:709.5px;top:190.5px;width:270.5px;height:17.5px;background:#efefef;border-bottom:1px solid #e0e0e0"></div>
<svg style="left:712.5px;top:196px" width="6" height="5" viewBox="0 0 6 5"><path d="M0 0H6L3 4.5Z" fill="#333"/></svg>
<div class="t" style="left:723px;top:194.5px;font-size:7.2px;font-weight:bold;color:#333">Configurations [1]</div>
<div class="t" style="left:939.5px;top:193px;font-size:11px;font-style:italic;color:#666;font-family:'Liberation Serif',serif">f<span style="font-size:9px">x</span></div>
<svg style="left:953px;top:193px" width="13" height="12" viewBox="0 0 13 12"><rect x="0.5" y="0.5" width="8" height="8" fill="#eee" stroke="#777" stroke-width="0.8"/><path d="M3 0.5V8.5M5.8 0.5V8.5" stroke="#777" stroke-width="0.7"/><path d="M10 5.5V11.5M7 8.5H13" stroke="#2ca24a" stroke-width="1.8"/></svg>
<svg style="left:972px;top:193px" width="3" height="12" viewBox="0 0 3 12"><circle cx="1.5" cy="1.5" r="0.9" fill="#666"/><circle cx="1.5" cy="6" r="0.9" fill="#666"/><circle cx="1.5" cy="10.5" r="0.9" fill="#666"/></svg>
<div class="t" style="left:720px;top:212.2px;font-size:7.2px;font-weight:bold;color:#333">Name</div>
<div class="a" style="left:709.5px;top:224.5px;width:270.5px;height:17.5px;background:#fff;border:1px solid #8ecde8"></div>
<div class="a" style="left:714.5px;top:228px;width:2.5px;height:10.5px;background:#1f8ad0"></div>
<div class="t" style="left:720px;top:229.8px;font-size:7.2px;color:#444">Configuration 1</div>
<div class="t" style="left:869.5px;top:250.8px;font-size:7.2px;color:#444">Add Configurations</div>
<div class="a" style="left:937px;top:246px;width:23.5px;height:15.5px;background:#fff;border:1px solid #d8d8d8"></div>
<div class="t" style="left:939px;top:250.8px;font-size:7.2px;color:#333">1</div>
<svg style="left:964.5px;top:250px" width="8" height="8" viewBox="0 0 8 8"><path d="M4 0V8M0 4H8" stroke="#444" stroke-width="1.3"/></svg>
<!-- panel bottom -->
<div class="a" style="left:703px;top:427.5px;width:298px;height:1.2px;background:#777"></div>
<div class="a" style="left:955px;top:434px;width:40px;height:12.5px;background:#e8e8e8;border:1px solid #d4d4d4"></div>
<div class="t" style="left:966px;top:437px;font-size:7.2px;color:#777">Close</div>
<!-- view cube -->
<svg style="left:0;top:0" width="1024" height="576" viewBox="0 0 1024 576">
<path d="M987.3 99.5V111" stroke="#a8dca8" stroke-width="1.3"/>
<path d="M973 117.5L987.3 110.6L1009 114L996 124.2Z" fill="#f3f3f3" stroke="#dedede" stroke-width="0.7"/>
<path d="M973 117.5L996 124.2L992.2 148.5L974.7 141.7Z" fill="#ededed" stroke="#dedede" stroke-width="0.7"/>
<path d="M996 124.2L1009 114L1007.8 136.9L992.2 148.5Z" fill="#e9e9e9" stroke="#dedede" stroke-width="0.7"/>
<text x="977" y="134" font-size="5.2" fill="#9a9a9a" transform="rotate(16 977 134)" font-family="Liberation Sans" font-weight="bold">FRONT</text>
<text x="989" y="117" font-size="3.6" fill="#aaa" transform="rotate(12 989 117)" font-family="Liberation Sans">TOP</text>
<path d="M994 126V131" stroke="#bbb" stroke-width="0.6"/>
<path d="M1008 133L1014 136" stroke="#f2b8b8" stroke-width="1"/>
<path d="M976 140.5L970 144" stroke="#b6aef0" stroke-width="1"/><path d="M969 144.5H972.5L969 148H972.5" fill="none" stroke="#a49ae8" stroke-width="0.8"/>
</svg>
<!-- comments -->
<div class="a" style="left:3px;top:497px;width:200px;height:16px;background:#f2f2f2;border:1px solid #e6e6e6"></div>
<div class="t" style="left:19.5px;top:501px;font-size:7.3px;color:#666">COMMENTS</div>
<svg style="left:188.5px;top:501.5px" width="7" height="7" viewBox="0 0 7 7"><circle cx="3.5" cy="3.5" r="3.2" fill="#333"/><circle cx="3.5" cy="3.5" r="1.1" fill="#ccc"/></svg>
<!-- nav bar -->
<div class="a" style="left:434.5px;top:496.5px;width:157px;height:15.5px;background:#f4f4f4"></div>
<svg style="left:434px;top:497px" width="160" height="15" viewBox="0 0 160 15">
<circle cx="8" cy="7.5" r="4.5" fill="none" stroke="#999" stroke-width="1"/><path d="M2 8Q8 3 14 8" fill="none" stroke="#999" stroke-width="1"/><path d="M17 6.5H21L19 8.5Z" fill="#555"/>
<rect x="25" y="5" width="9" height="6" fill="#999"/><rect x="25" y="3" width="9" height="1.5" fill="#aaa"/>
<path d="M43 13Q40 9 41 7L42 6V3.5H43.5V6.5V2.5H45V6V2H46.5V6.5V3H48V8.5Q48.5 12 46.5 13Z" fill="none" stroke="#777" stroke-width="0.9"/>
<circle cx="62" cy="6.5" r="3.5" fill="none" stroke="#777" stroke-width="1.1"/><path d="M64.5 9L68 12.5" stroke="#555" stroke-width="1.6"/><path d="M66 2V5M64.5 3.5H67.5" stroke="#777" stroke-width="0.7"/>
<circle cx="79" cy="6.5" r="3.5" fill="none" stroke="#777" stroke-width="1.1"/><path d="M81.5 9L85 12.5" stroke="#555" stroke-width="1.6"/><path d="M89 6.5H93L91 8.5Z" fill="#555"/>
<rect x="98" y="3" width="11" height="8" fill="#8fb7de" stroke="#7a9cc0" stroke-width="0.6"/><rect x="101" y="11" width="5" height="2" fill="#777"/><path d="M111 6.5H115L113 8.5Z" fill="#555"/>
<rect x="119" y="3" width="10" height="10" fill="#a4a4a4"/><path d="M119 6.3H129M119 9.6H129M122.3 3V13M125.6 3V13" stroke="#ccc" stroke-width="0.5"/><path d="M132 6.5H136L134 8.5Z" fill="#555"/>
<rect x="140" y="3" width="11" height="9" fill="#86b4e0" stroke="#6a93c0" stroke-width="0.7"/><path d="M145.5 3V12" stroke="#eee" stroke-width="0.8"/><path d="M153 6.5H157L155 8.5Z" fill="#555"/>
</svg>
<svg style="left:1006px;top:501px" width="12" height="12" viewBox="0 0 12 12"><circle cx="6" cy="6" r="5.3" fill="#1a1a1a"/><path d="M3 8Q4 3.5 8.5 3.5L7 5.5Q5.5 6 5 8Z" fill="#fff"/></svg>
<!-- timeline -->
<div class="a" style="left:0;top:518px;width:1024px;height:32px;background:#f1f1f1"></div>
<svg style="left:0;top:520px" width="160" height="28" viewBox="0 0 160 28">
<path d="M7.5 10V17M8.5 13.5L14.5 10V17Z" stroke="#444" stroke-width="1.2" fill="#444"/>
<path d="M24 13.5L28 10.5V16.5Z" fill="#444"/><path d="M28.5 11V16" stroke="#444" stroke-width="2.2"/><path d="M30.5 11.5L32 13.5L30.5 15.5Z" fill="#444"/>
<path d="M41 9.8L48.5 13.5L41 17.2Z" fill="#444"/>
<path d="M57.5 11.5L56 13.5L57.5 15.5Z" fill="#444"/><path d="M59.5 11V16" stroke="#444" stroke-width="2.2"/><path d="M61 10.5L65 13.5L61 16.5Z" fill="#444"/>
<path d="M74 10L80 13.5L74 17Z M81 10V17" stroke="#444" stroke-width="1.2" fill="#444"/>
<rect x="96" y="5.5" width="15" height="14" fill="#5ab4ec"/><rect x="112" y="5.5" width="15" height="14" fill="#5ab4ec"/><rect x="128" y="5.5" width="14" height="14" fill="#5ab4ec"/>
<path d="M99 9H106V16H99Z" fill="none" stroke="#3a8fc8" stroke-width="0.7"/><path d="M103 13H108" stroke="#e07a30" stroke-width="1"/>
<path d="M116 16L124 9V16Z" fill="#3a8fc8"/>
<path d="M131 15L134 9L139 11V16Z" fill="#e6e6e6"/>
<path d="M103 20.5V22.5H121V20.5M115 22.5V20.5M137 20.5V22.5" stroke="#bbb" stroke-width="0.6" fill="none"/>
<rect x="139" y="3" width="8" height="3" fill="#555"/><path d="M143 5V24" stroke="#444" stroke-width="1.8"/>
</svg>
<!-- taskbar -->
<div class="a" style="left:0;top:550px;width:1024px;height:26px;background:#383b42"></div>
<div class="a" style="left:0;top:550px;width:33px;height:26px;background:#3a3e47"></div>
<div class="a" style="left:33px;top:550px;width:228px;height:26px;background:#303030"></div>
<svg style="left:10px;top:557px" width="12" height="12" viewBox="0 0 12 12"><path d="M0 1.7L4.9 1V5.6H0ZM5.6 0.9L12 0V5.6H5.6ZM0 6.3H4.9V11L0 10.3ZM5.6 6.3H12V12L5.6 11.1Z" fill="#f4f4f4"/></svg>
<svg style="left:39px;top:557px" width="13" height="13" viewBox="0 0 13 13"><circle cx="8" cy="5" r="3.8" fill="none" stroke="#ddd" stroke-width="1.1"/><path d="M5.3 7.7L1 12" stroke="#ddd" stroke-width="1.2"/></svg>
<div class="t" style="left:59px;top:558px;font-size:9.6px;color:#e8e8e8">Wyszukaj</div>
<!-- taskbar icons -->
<div class="a" style="left:496.5px;top:550px;width:31.5px;height:26px;background:#4b4e53"></div>
<div class="a" style="left:300px;top:574px;width:26px;height:2px;background:#8fb8dc"></div>
<div class="a" style="left:335px;top:574px;width:26px;height:2px;background:#8fb8dc"></div>
<div class="a" style="left:399px;top:574px;width:28px;height:2px;background:#8fb8dc"></div>
<div class="a" style="left:465px;top:574px;width:27px;height:2px;background:#8fb8dc"></div>
<div class="a" style="left:497px;top:574px;width:31px;height:2px;background:#8fb8dc"></div>
<div class="a" style="left:531px;top:574px;width:30px;height:2px;background:#8fb8dc"></div>
<svg style="left:0;top:550px" width="1024" height="26" viewBox="0 0 1024 26">
<!-- outlook -->
<rect x="276" y="6" width="11" height="12" rx="1" fill="#1a73d0"/><rect x="271.5" y="8.5" width="8" height="8" rx="1" fill="#0f5bb0"/><circle cx="275.5" cy="12.5" r="2.2" fill="none" stroke="#fff" stroke-width="1.2"/>
<!-- chrome -->
<circle cx="312.5" cy="12.5" r="7" fill="#db4437"/><path d="M312.5 12.5L306.4 16L309 18.6Q312.5 20 316 18.6L312.5 12.5Z" fill="#0f9d58"/><path d="M312.5 12.5L305.5 12.5Q305.3 14.5 306.4 16L309 18.6Q304 20 304.5 12Z" fill="#0f9d58"/><path d="M312.5 12.5L319.5 12.5Q319.5 16 316 18.6L310 20Z" fill="#f4b400"/><circle cx="312.5" cy="12.5" r="3" fill="#fff"/><circle cx="312.5" cy="12.5" r="2.2" fill="#4285f4"/>
<!-- explorer -->
<path d="M339 7H345L346.5 8.5H353V18H339Z" fill="#f5c342"/><rect x="339" y="10" width="14" height="8" fill="#ffd968"/><rect x="343" y="13" width="6" height="3" fill="#3a8fd8"/>
<!-- capture -->
<rect x="371" y="6" width="14" height="13" fill="#111"/><path d="M373 9.5V8H374.5M381.5 8H383V9.5M383 15.5V17H381.5M374.5 17H373V15.5" stroke="#eee" stroke-width="0.9" fill="none"/><path d="M377.5 10V14H379.5" stroke="#eee" stroke-width="0.9" fill="none"/>
<!-- excel -->
<rect x="407" y="5.5" width="12" height="13" rx="1" fill="#1f9d55"/><rect x="404" y="8" width="8" height="9" rx="1" fill="#107c41"/><path d="M406 10L410 15M410 10L406 15" stroke="#fff" stroke-width="1"/>
<!-- app -->
<ellipse cx="444.5" cy="10" rx="6" ry="4" fill="#e8dede" transform="rotate(-20 444.5 10)"/><path d="M446 13L449 19M446 14L443 18.5" stroke="#3a7bc0" stroke-width="2"/>
<!-- obs-like -->
<circle cx="478.5" cy="11.5" r="6.5" fill="#222" stroke="#bbb" stroke-width="1"/><path d="M476 9L480 7M478 13L482 15" stroke="#ddd" stroke-width="0.8"/><circle cx="482.5" cy="15.5" r="4" fill="#e8141b"/>
<!-- fusion -->
<rect x="505" y="5" width="14" height="14" rx="2" fill="#f2761f"/><path d="M510 8.5H514.5M510 8.5V14M510 11H513.5" stroke="#fff" stroke-width="1.5"/><rect x="506.5" y="15.5" width="11" height="2.5" fill="#c85a12"/>
<!-- teams -->
<circle cx="548" cy="7.5" r="2.4" fill="#7b83eb"/><rect x="537.5" y="8.5" width="11" height="10" rx="2" fill="#5059c9"/><path d="M540 11H546M543 11V16.5" stroke="#fff" stroke-width="1.3"/><rect x="547" y="10" width="5" height="7" rx="2" fill="#7b83eb"/><circle cx="551" cy="17" r="3.2" fill="#92c353"/>
<!-- tray -->
<path d="M901 15.5L905 11.5L909 15.5" fill="none" stroke="#e0e0e0" stroke-width="1"/>
<path d="M917 18A9 9 0 0 1 926 9M919.5 18A6.5 6.5 0 0 1 926 11.5M922 18A4 4 0 0 1 926 14" fill="none" stroke="#d8d8d8" stroke-width="0.9"/><circle cx="925" cy="17" r="1" fill="#ddd"/>
<path d="M932 10H934L937 7.5V17.5L934 15H932Z" fill="none" stroke="#e0e0e0" stroke-width="0.9"/><path d="M939 10.5Q940.5 12.5 939 14.5M940.8 9Q943 12.5 940.8 16" fill="none" stroke="#e0e0e0" stroke-width="0.8"/>
<path d="M998.5 9H1010V16.5H1003L1000 19V16.5H998.5Z" fill="#f2f2f2"/><path d="M1000.5 11.5H1008M1000.5 14H1005.5" stroke="#444" stroke-width="0.9"/>
<circle cx="1008.5" cy="18.5" r="4.3" fill="#383b42" stroke="#999" stroke-width="0.8"/>
</svg>
<div class="t" style="left:1006.5px;top:564.8px;font-size:7px;color:#f0f0f0">3</div>
<div class="t" style="left:958.5px;top:553px;font-size:7px;color:#f0f0f0">14:21</div>
<div class="t" style="left:949.5px;top:565.5px;font-size:7px;color:#f0f0f0">14.11.2023</div>
<!-- subuj mat -->
<div class="a" style="left:984px;top:534px;width:26.5px;height:26px;background:linear-gradient(#3d71b3 0,#3d71b3 61%,#2e5891 61%)"></div>
<div class="t" style="left:988px;top:539.3px;font-size:5.6px;font-weight:bold;color:#d0dff2;letter-spacing:-0.1px">SUBUJ</div>
<div class="t" style="left:987.6px;top:546.8px;font-size:9.2px;font-weight:bold;color:#f2f2f2;letter-spacing:-0.8px">MAT</div>
<svg style="left:1005px;top:526px" width="13" height="13" viewBox="0 0 13 13"><path d="M6.5 0.5L7.7 2.3L9.8 1.7L10.1 3.9L12.2 4.6L11.2 6.5L12.2 8.4L10.1 9.1L9.8 11.3L7.7 10.7L6.5 12.5L5.3 10.7L3.2 11.3L2.9 9.1L0.8 8.4L1.8 6.5L0.8 4.6L2.9 3.9L3.2 1.7L5.3 2.3Z" fill="#6a6a6a"/><circle cx="6.5" cy="6.5" r="2.3" fill="#f1f1f1"/></svg>
</body></html>
